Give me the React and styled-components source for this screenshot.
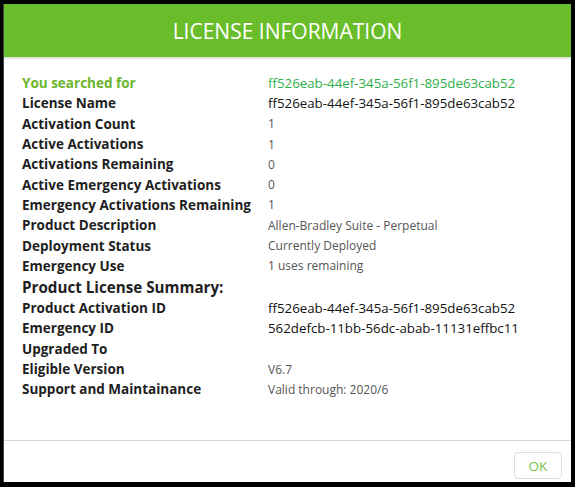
import React from "react";
import styled, { createGlobalStyle } from "styled-components";

const Global = createGlobalStyle`
  html, body { margin: 0; padding: 0; background: #000; }
  body { font-family: "Open Sans", "Liberation Sans", sans-serif; }
  * { box-sizing: border-box; }
`;

const Frame = styled.div`
  width: 575px;
  height: 487px;
  padding: 4px 4px 5px 3px;
  background: #000;
`;

const Modal = styled.div`
  height: 100%;
  display: flex;
  flex-direction: column;
  background: #fff;
  border-left: 1px solid #444;
`;

const Header = styled.div`
  height: 53px;
  background: #6abd2a;
  display: flex;
  align-items: center;
  justify-content: center;
  border-bottom: 2px solid #e2e2e2;
  box-sizing: content-box;
`;

const Title = styled.h1`
  margin: 0;
  color: #fff;
  font-size: 21px;
  font-weight: 400;
  letter-spacing: 0;
`;

const Body = styled.div`
  flex: 1;
  padding: 14px 0 0 18px;
  display: flex;
  flex-direction: column;
`;

const Grid = styled.div`
  display: grid;
  grid-template-columns: 246px 1fr;
  grid-auto-rows: 20.3px;
  align-items: center;
`;

const Label = styled.div`
  font-size: 13.5px;
  font-weight: 700;
  color: ${(p) => (p.$accent ? "#6ab42a" : "#1e1e1e")};
  white-space: nowrap;
`;

const Value = styled.div`
  font-size: ${(p) => (p.$id ? "13.3px" : "12px")};
  color: ${(p) => (p.$accent ? "#2eaf4a" : p.$id ? "#111" : "#555")};
  white-space: nowrap;
`;

const Section = styled.div`
  font-size: 15.2px;
  font-weight: 700;
  color: #1e1e1e;
  height: 22px;
  line-height: 22px;
`;

const Footer = styled.div`
  height: 42px;
  border-top: 1px solid #d8d8d8;
  display: flex;
  justify-content: flex-end;
  align-items: flex-start;
  padding: 11px 9px 0 0;
`;

const Button = styled.button`
  width: 48px;
  height: 27px;
  background: #fff;
  border: 1px solid #ddd;
  border-radius: 4px;
  color: #78c440;
  font-family: "Open Sans", "Liberation Sans", sans-serif;
  font-size: 13.5px;
  padding: 0;
  cursor: pointer;
`;

const rows1 = [
  ["You searched for", "ff526eab-44ef-345a-56f1-895de63cab52", "accent"],
  ["License Name", "ff526eab-44ef-345a-56f1-895de63cab52", "id"],
  ["Activation Count", "1"],
  ["Active Activations", "1"],
  ["Activations Remaining", "0"],
  ["Active Emergency Activations", "0"],
  ["Emergency Activations Remaining", "1"],
  ["Product Description", "Allen-Bradley Suite - Perpetual"],
  ["Deployment Status", "Currently Deployed"],
  ["Emergency Use", "1 uses remaining"],
];

const rows2 = [
  ["Product Activation ID", "ff526eab-44ef-345a-56f1-895de63cab52", "id"],
  ["Emergency ID", "562defcb-11bb-56dc-abab-11131effbc11", "id"],
  ["Upgraded To", ""],
  ["Eligible Version", "V6.7"],
  ["Support and Maintainance", "Valid through: 2020/6"],
];

function Rows({ rows }) {
  return (
    <Grid>
      {rows.map(([l, v, kind]) => (
        <React.Fragment key={l}>
          <Label $accent={kind === "accent"}>{l}</Label>
          <Value $accent={kind === "accent"} $id={kind === "id" || kind === "accent"}>
            {v}
          </Value>
        </React.Fragment>
      ))}
    </Grid>
  );
}

export default function App() {
  return (
    <>
      <Global />
      <Frame>
        <Modal>
          <Header>
            <Title>LICENSE INFORMATION</Title>
          </Header>
          <Body>
            <Rows rows={rows1} />
            <Section>Product License Summary:</Section>
            <Rows rows={rows2} />
          </Body>
          <Footer>
            <Button>OK</Button>
          </Footer>
        </Modal>
      </Frame>
    </>
  );
}
